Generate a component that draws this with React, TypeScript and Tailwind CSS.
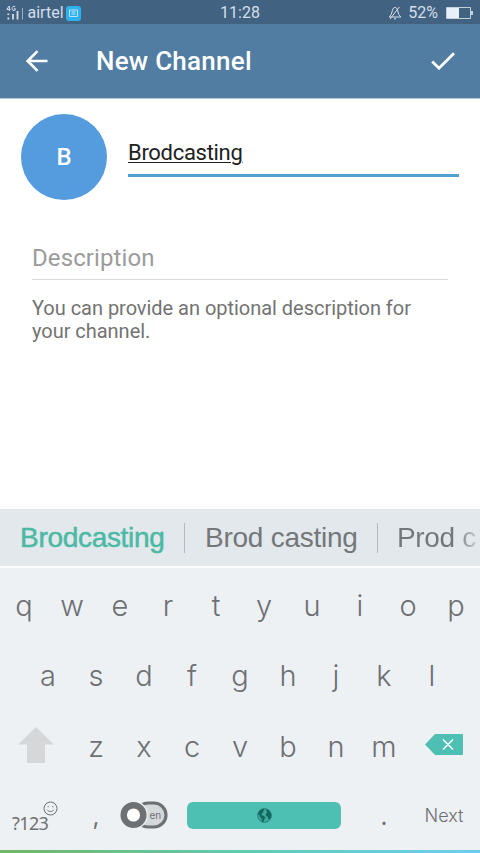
import React from 'react';

interface KeyProps {
  label: string;
}

const Key: React.FC<KeyProps> = ({ label }) => (
  <button className="flex w-12 items-center justify-center text-[29px] leading-none font-light text-[#6d7073]">
    {label}
  </button>
);

const topRow = ['q', 'w', 'e', 'r', 't', 'y', 'u', 'i', 'o', 'p'];
const homeRow = ['a', 's', 'd', 'f', 'g', 'h', 'j', 'k', 'l'];
const bottomRow = ['z', 'x', 'c', 'v', 'b', 'n', 'm'];

const StatusBar: React.FC = () => (
  <div className="grid h-6 grid-cols-3 items-center bg-[#426282] text-base leading-6 text-[#d3dfea]">
    <div className="flex items-center pt-px pl-1.5">
      {/* Signal strength */}
      <svg className="h-4 w-[18px]" viewBox="0 0 18 16" fill="none" stroke="currentColor">
        <path d="M3.2 1 .8 4.4h3.7M3.4 1v5M9.2 1.8C7.5.8 6 1.8 6 3.5s1.6 2.6 3.2 1.6V3.7H7.8" />
        <path d="M2.3 12.5v2M2.3 8.5V10" strokeWidth="1.8" />
        <path d="M7 9v5.5" strokeWidth="1.8" />
        <path d="M11.5 6v8.5" strokeWidth="1.8" />
        <path d="M16.5 3v11.5" opacity=".6" />
      </svg>
      <span className="ml-[3.5px]">airtel</span>
      <svg className="ml-[2.5px] size-[15px]" viewBox="0 0 15 15">
        <rect width="15" height="15" rx="3" fill="#2fb0f0" />
        <path d="M3.5 4h8v6.5h-8zM5.5 6h4M5.5 8h4" fill="none" stroke="#b5e6fd" />
      </svg>
    </div>
    <div className="pt-px text-center">11:28</div>
    <div className="flex items-center justify-end pt-px pr-[7px]">
      {/* Muted bell */}
      <svg className="h-[14px] w-[14px]" viewBox="0 0 14 14" fill="none" stroke="currentColor" strokeWidth="1">
        <path d="M1.2 11h11.6L10.8 8.5 9.5 4.2C9 2.2 8.2 1.5 7 1.5S5 2.2 4.5 4.2L3.2 8.5zM6 12.8h2M11.5.8 2 13" />
      </svg>
      <span className="ml-1.5">52%</span>
      <svg className="ml-2 h-3 w-[27px]" viewBox="0 0 27 12">
        <path d="M.5.5h24v11H.5z" fill="none" stroke="#c2d0dd" />
        <path d="M1 1h12v10H1z" fill="#e7f0f8" />
        <path d="M25 4h2v4h-2z" fill="#c2d0dd" />
      </svg>
    </div>
  </div>
);

const Header: React.FC = () => (
  <header className="flex h-[75px] items-center border-b border-[#b8cada] bg-[#517da2] text-white">
    <svg className="ml-[26px] h-[22px] w-[22px]" viewBox="0 0 22 22" fill="none" stroke="currentColor" strokeWidth="2.6">
      <path d="M21.5 11H2M11.5 1.2 1.7 11l9.8 9.8" />
    </svg>
    <h1 className="ml-12 flex-1 text-[26px] leading-none font-medium tracking-[0.25px]">New Channel</h1>
    <svg className="mr-[25px] h-[18px] w-6" viewBox="0 0 24 18" fill="none" stroke="currentColor" strokeWidth="2.8">
      <path d="M1.2 9.5 8 16.2 23 1.3" />
    </svg>
  </header>
);

const ChannelForm: React.FC = () => (
  <main className="flex-1">
    <div className="flex pt-[15px] pr-[21px] pl-[21px]">
      <div className="flex size-[86px] items-center justify-center rounded-full bg-[#549cdd] text-2xl font-medium text-white">
        B
      </div>
      <div className="mt-6 ml-[21px] h-[39px] flex-1 border-b-[3px] border-[#52a0cf] text-[22px] leading-[30px] tracking-[-0.3px] text-[#212121]">
        <span className="underline decoration-1 underline-offset-2">Brodcasting</span>
      </div>
    </div>
    <div className="mx-8 mt-10 h-10 border-b border-[#d9d9d9] text-2xl leading-[37px] tracking-[0.1px] text-[#9b9b9b]">
      Description
    </div>
    <p className="mx-8 mt-[17px] text-xl leading-[23px] tracking-[-0.03px] text-[#737373]">
      You can provide an optional description for your channel.
    </p>
  </main>
);

const Suggestions: React.FC = () => (
  <div className="flex h-[59px] items-center overflow-hidden border-b-2 border-[#fafcfc] bg-[#e2e8eb] pt-px font-['Liberation_Sans',sans-serif] text-[28px] leading-none whitespace-nowrap text-[#747779]">
    <span className="w-[184px] shrink-0 pl-5 tracking-[-0.3px] text-[#4bb9a5] [-webkit-text-stroke:0.5px]">Brodcasting</span>
    <span className="h-[30px] w-px shrink-0 bg-[#b4babd]" />
    <span className="w-48 shrink-0 pl-5 tracking-[-0.25px]">Brod casting</span>
    <span className="h-[30px] w-px shrink-0 bg-[#b4babd]" />
    <span className="w-[102px] shrink-0 bg-gradient-to-r from-[#747779] from-75% to-[#d2d8da] bg-clip-text py-1 pl-[19px] tracking-[-0.35px] text-transparent">
      Prod c
    </span>
  </div>
);

const Globe: React.FC = () => (
  <svg className="size-[15px]" viewBox="0 0 16 16" fill="#12685f">
    <circle cx="8" cy="8" r="7.3" fill="#3fa99d" stroke="#12685f" strokeWidth=".8" />
    <path d="M1 6.5C1.6 3.6 4 1.3 7 .8l1.2 1.4-1.7 1 .4 1.3-2 1.5.2 1.7 2.4.8 1.5 1.8-1.4 2-.9 2.9-1.3-.5-.5-3.2-1.6-1.8L2.6 7.4z" />
    <path d="M10 1.3c2.6.8 4.7 2.9 5.2 5.4l-.4 3-1.6 2.6-1-.2-.6-2.8-1.9-.6-.4-2.3 1.5-1.6-.8-1.4z" />
  </svg>
);

const Keyboard: React.FC = () => (
  <section className="shrink-0 bg-[#edf1f4] font-[Inter,sans-serif]">
    <Suggestions />
    <div className="flex h-[73px] pt-px">
      {topRow.map((k) => (
        <Key key={k} label={k} />
      ))}
    </div>
    <div className="flex h-[70px] px-6 pb-px">
      {homeRow.map((k) => (
        <Key key={k} label={k} />
      ))}
    </div>
    <div className="flex h-[70px] items-stretch">
      <button className="flex w-[72px] items-center justify-center pb-[3px]">
        <svg className="h-9 w-9" viewBox="0 0 36 36" fill="#d5d7d8">
          <path d="M18 0 36 17.5h-9V36H9V17.5H0z" />
        </svg>
      </button>
      {bottomRow.map((k) => (
        <Key key={k} label={k} />
      ))}
      <button className="flex w-[72px] items-center justify-center pb-1">
        <svg className="h-[21px] w-[38px]" viewBox="0 0 38 21">
          <path d="M0 10.5 10 0h27a1 1 0 0 1 1 1v19a1 1 0 0 1-1 1H10z" fill="#4ec0b3" />
          <path d="m18 5.5 10 10m0-10-10 10" stroke="#fff" strokeWidth="1.5" />
        </svg>
      </button>
    </div>
    <div className="flex h-[69px] items-center pb-px">
      <button className="relative w-[72px] pt-[15px] pl-3 text-left font-['Noto_Sans',sans-serif] text-lg leading-6 tracking-[-0.6px] text-[#6d7073]">
        ?123
        <svg className="absolute top-[5px] left-[43px] size-[15px]" viewBox="0 0 15 15" fill="none" stroke="currentColor">
          <circle cx="7.5" cy="7.5" r="6.5" fill="#edf1f4" />
          <path d="M4.2 8.8c1.3 2.3 5.3 2.3 6.6 0M5.2 5v1.2M9.8 5v1.2" />
        </svg>
      </button>
      <button className="w-12 pt-1 text-center text-2xl leading-none text-[#6d7073]">,</button>
      {/* Language toggle */}
      <button className="w-12">
        <svg className="h-7 w-12" viewBox="0 0 48 28">
          <rect x="16" y="2" width="30" height="24" rx="12" fill="#d5d8da" stroke="#6e7173" strokeWidth="3.2" />
          <circle cx="14" cy="14" r="14" fill="#edf1f4" />
          <circle cx="13.5" cy="14" r="9.8" fill="#fff" stroke="#6e7173" strokeWidth="6.5" />
          <text x="29.5" y="17.5" fontSize="10" fill="#6e7173">en</text>
        </svg>
      </button>
      <button className="mr-[19px] ml-[19px] flex h-[27px] w-[154px] items-center justify-center rounded-md bg-[#4ec0b3]">
        <Globe />
      </button>
      <button className="w-12 pt-1 text-center text-2xl leading-none text-[#6d7073]">.</button>
      <button className="w-[72px] pt-px text-center text-lg font-light text-[#6d7073]">Next</button>
    </div>
    <div className="h-[3px] bg-gradient-to-r from-[#70b565] via-[#60cbb0] to-[#6fcdf0]" />
  </section>
);

const App: React.FC = () => {
  return (
    <div className="flex h-[853px] w-[480px] flex-col overflow-hidden bg-white font-[Roboto,sans-serif]">
      <StatusBar />
      <Header />
      <ChannelForm />
      <Keyboard />
    </div>
  );
};

export default App;
